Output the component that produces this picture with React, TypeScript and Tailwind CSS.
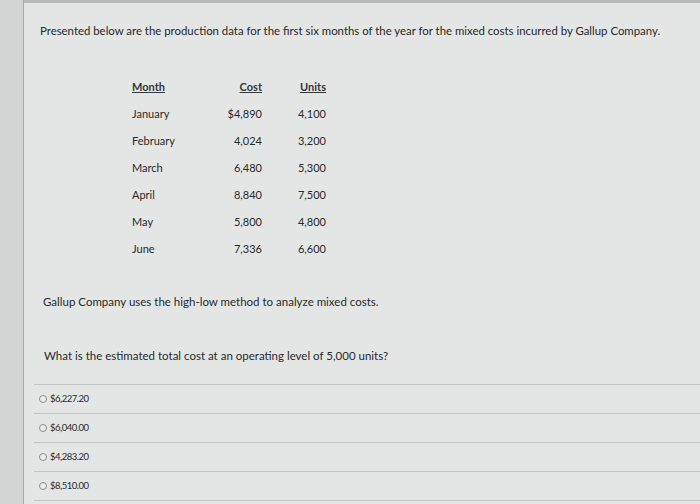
import React from "react";

const rows = [
  { month: "January", cost: "$4,890", units: "4,100" },
  { month: "February", cost: "4,024", units: "3,200" },
  { month: "March", cost: "6,480", units: "5,300" },
  { month: "April", cost: "8,840", units: "7,500" },
  { month: "May", cost: "5,800", units: "4,800" },
  { month: "June", cost: "7,336", units: "6,600" },
];

const options = ["$6,227.20", "$6,040.00", "$4,283.20", "$8,510.00"];

export default function App() {
  return (
    <div
      className="flex h-[504px] w-[700px] overflow-hidden bg-[#e4e6e6] text-[#27292a]"
      style={{ fontFamily: "Lato, 'Open Sans', sans-serif" }}
    >
      <div className="w-[24px] shrink-0 border-r border-[#a9abab] bg-[#d3d5d5]" />
      <div className="flex flex-1 flex-col border-t-[3px] border-[#b9bbbb]">
        <p className="ml-[16px] mt-[21px] text-[11.4px] leading-[14px]">
          Presented below are the production data for the first six months of the year for the mixed costs incurred by Gallup Company.
        </p>

        <div className="ml-[108px] mt-[36px] grid grid-cols-[80px_50px_64px] text-[11px]">
          <div className="flex h-[27px] items-center">
            <span className="font-bold text-[#34363a] underline">Month</span>
          </div>
          <div className="flex h-[27px] items-center justify-end">
            <span className="font-bold text-[#34363a] underline">Cost</span>
          </div>
          <div className="flex h-[27px] items-center justify-end">
            <span className="font-bold text-[#34363a] underline">Units</span>
          </div>
          {rows.map((r) => (
            <React.Fragment key={r.month}>
              <div className="flex h-[27px] items-center">{r.month}</div>
              <div className="flex h-[27px] items-center justify-end">{r.cost}</div>
              <div className="flex h-[27px] items-center justify-end">{r.units}</div>
            </React.Fragment>
          ))}
        </div>

        <p className="ml-[19px] mt-[32px] text-[11.5px] leading-[14px]">
          Gallup Company uses the high-low method to analyze mixed costs.
        </p>
        <p className="ml-[20px] mt-[40px] text-[11.5px] leading-[14px]">
          What is the estimated total cost at an operating level of 5,000 units?
        </p>

        <div className="ml-[10px] mt-[21px] border-t border-[#c4c6c6]">
          {options.map((o) => (
            <div
              key={o}
              className="flex h-[29px] items-center gap-[3px] border-b border-[#c4c6c6] pl-[5px] text-[9.5px] tracking-[-0.5px]"
            >
              <span className="h-[8px] w-[8px] rounded-full border border-[#8a8c8c] bg-[#eceeee]" />
              {o}
            </div>
          ))}
        </div>
      </div>
    </div>
  );
}
